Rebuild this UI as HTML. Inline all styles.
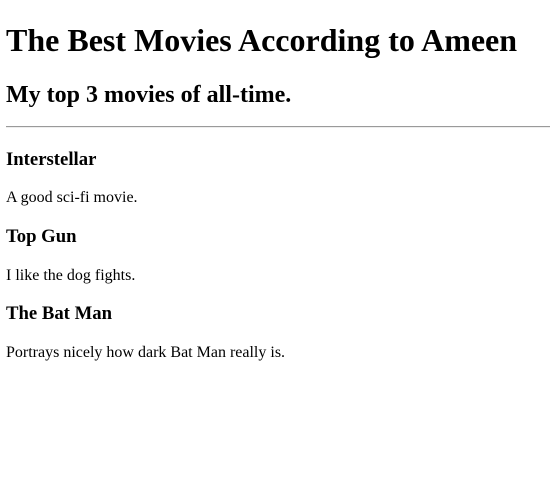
<!DOCTYPE html>
<html><head><style>
body{margin:0;width:559px;height:497px;background:#fff;font-family:"Liberation Serif",serif;color:#000;position:relative}
div{position:absolute;left:6px;white-space:nowrap;line-height:1}
.h1{font-size:32px;font-weight:bold;top:24px}
.h2{font-size:24px;font-weight:bold;top:83px}
.h3{font-size:18.72px;font-weight:bold}
.p{font-size:16px}
hr{position:absolute;left:6px;top:126px;width:544px;margin:0;border:0;border-top:1px solid #9a9a9a;border-bottom:1px solid #eee;height:0}
</style></head><body>
<div class="h1">The Best Movies According to Ameen</div>
<div class="h2">My top 3 movies of all-time.</div>
<hr>
<div class="h3" style="top:151px">Interstellar</div>
<div class="p" style="top:190px">A good sci-fi movie.</div>
<div class="h3" style="top:228px">Top Gun</div>
<div class="p" style="top:268px">I like the dog fights.</div>
<div class="h3" style="top:305px">The Bat Man</div>
<div class="p" style="top:345px">Portrays nicely how dark Bat Man really is.</div>
</body></html>
